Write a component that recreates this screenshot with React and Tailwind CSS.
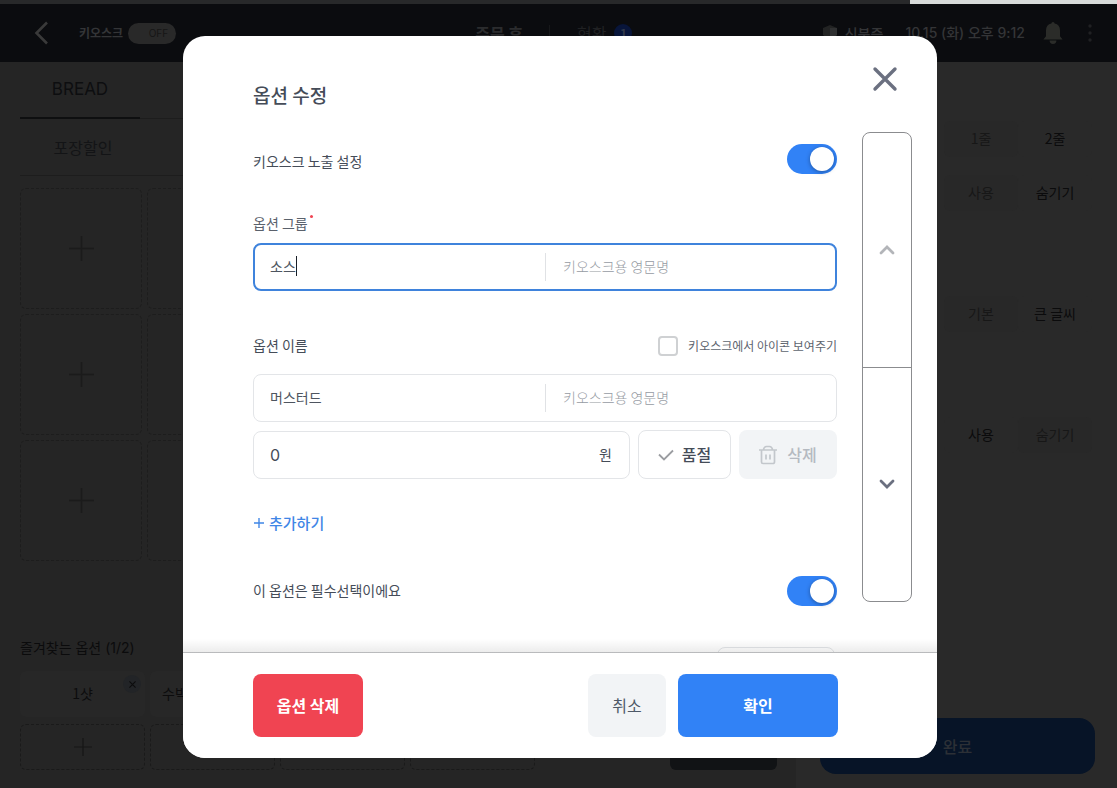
import React, { useState } from "react";

function Plus({ className }) {
  return (
    <svg viewBox="0 0 24 24" className={className} fill="none" stroke="currentColor" strokeWidth="1.6" aria-hidden="true">
      <path d="M12 0v24M0 12h24" />
    </svg>
  );
}

function Header() {
  return (
    <header className="flex h-[58px] items-center bg-[#0b0c0f] text-[#343537]">
      <button type="button" aria-label="뒤로" className="ml-[34px] text-[#3a3a3a]">
        <svg viewBox="0 0 14 24" className="h-6 w-3.5" fill="none" stroke="currentColor" strokeWidth="2.6">
          <path d="M13 1.5 2.5 12 13 22.5" />
        </svg>
      </button>
      <span className="ml-[31px] text-xs font-bold">키오스크</span>
      <button
        type="button"
        role="switch"
        aria-checked="false"
        aria-label="키오스크"
        className="ml-[5px] flex h-[21px] w-12 items-center justify-end rounded-full bg-[#292929] pr-2 font-['Inter',sans-serif] text-[10px] text-[#161616]"
      >
        OFF
      </button>
      <nav className="ml-[299px] flex items-center text-[15px]">
        <a href="#order" className="text-base font-bold text-[#2b2c2e]">주문 후</a>
        <span className="ml-[26px] h-4 w-px bg-[#17181a]" />
        <a href="#status" className="ml-[27px] text-base text-[#202123]">현황</a>
        <span className="ml-2 flex size-[18px] items-center justify-center rounded-full bg-[#08153a] text-xs font-bold text-[#323a4a]">1</span>
      </nav>
      <div className="ml-auto flex items-center">
        <svg viewBox="0 0 16 16" className="size-4" aria-hidden="true">
          <path d="M8 0 15 3v7l-7 6-7-6V3z" fill="#222323" />
          <path d="M8 3 15 3v7l-7 6z" fill="#2f3031" />
        </svg>
        <span className="ml-[7px] text-sm font-medium">신분증</span>
        <time className="ml-[22px] font-['Inter','Noto_Sans_CJK_KR',sans-serif] text-sm font-medium">10.15 (화) 오후 9:12</time>
        <button type="button" aria-label="알림" className="ml-[18px] text-[#2b2c29]">
          <svg viewBox="0 0 20 22" className="h-[22px] w-5" fill="currentColor">
            <path d="M10 0a1.6 1.6 0 0 1 1.6 1.6A6.8 6.8 0 0 1 17 8.200v6l2.600 3.200H.4L3 14.200v-6a6.800 6.800 0 0 1 5.400-6.600A1.600 1.600 0 0 1 10 0zM6.600 18.600h6.800a3.400 3.400 0 0 1-6.800 0z" />
          </svg>
        </button>
        <button type="button" aria-label="더보기" className="mr-[25px] ml-[25px] text-[#202123]">
          <svg viewBox="0 0 4 18" className="h-[18px] w-1" fill="currentColor">
            <circle cx="2" cy="2" r="1.700" />
            <circle cx="2" cy="9" r="1.700" />
            <circle cx="2" cy="16" r="1.700" />
          </svg>
        </button>
      </div>
    </header>
  );
}

const tiles = Array.from({ length: 18 }, (_, i) => i);

function MenuPanel() {
  return (
    <section className="flex min-w-0 flex-1 flex-col bg-[#252525] pr-[19px] pb-[18px] pl-5">
      <div className="flex h-[57px] border-b border-[#1d1d1d]">
        <button type="button" className="-mb-px w-[120px] border-b-2 border-[#0e0f10] font-['Inter',sans-serif] text-[17px] text-[#0d0e10]">BREAD</button>
      </div>
      <div className="flex h-[57px] border-b border-[#1d1d1d]">
        <button type="button" className="w-[126px] text-base text-[#131416]">포장할인</button>
      </div>
      <div className="mt-3 grid grid-cols-6 gap-[5px]">
        {tiles.map((t) => (
          <button key={t} type="button" aria-label="메뉴 추가" className="flex h-[121px] items-center justify-center rounded-md border border-dashed border-[#1d1d1d] text-[#1b1b1b]">
            <Plus className="size-[25px]" />
          </button>
        ))}
      </div>
      <h2 className="mt-auto font-['Inter','Noto_Sans_CJK_KR',sans-serif] text-sm leading-5 text-[#0b0b0c]">즐겨찾는 옵션 (1/2)</h2>
      <div className="mt-[13px] flex items-end justify-between">
        <div className="grid w-[515px] grid-cols-4 gap-x-[5px] gap-y-[7px] text-sm text-[#0c0c0d]">
          <div className="relative">
            <button type="button" className="h-[46px] w-full rounded-md bg-[#272727] pb-0.5">1샷</button>
            <button type="button" aria-label="1샷 삭제" className="absolute top-1 right-1 flex size-[18px] items-center justify-center rounded-full bg-[#222427]">
              <svg viewBox="0 0 8 8" className="size-[7px]" stroke="currentColor" strokeWidth="1.300"><path d="M.5.5l7 7M7.500.5l-7 7" /></svg>
            </button>
          </div>
          <button type="button" className="h-[46px] rounded-md bg-[#272727] pb-0.5 pl-3 text-left">수박주스</button>
          <button type="button" aria-label="추가" className="h-[46px] rounded-md border border-dashed border-[#1a1a1a]" />
          <button type="button" aria-label="추가" className="h-[46px] rounded-md border border-dashed border-[#1a1a1a]" />
          {[0, 1, 2, 3].map((n) => (
            <button key={n} type="button" aria-label="옵션 추가" className="flex h-[46px] items-center justify-center rounded-md border border-dashed border-[#1a1a1a] text-[#161616]">
              <Plus className="size-[18px]" />
            </button>
          ))}
        </div>
        <button type="button" aria-label="다음" className="h-[46px] w-[107px] rounded-md bg-[#111315]" />
      </div>
    </section>
  );
}

function Segment({ items, active }) {
  return (
    <div className="flex h-9 justify-end pr-[3px] text-sm">
      {items.map((label, i) => (
        <button
          key={label}
          type="button"
          className={i === active ? "w-[74px] rounded-md bg-[#292929] pb-0.5 text-[#0b0b0c]" : "w-[74px] rounded-md bg-[#282828] pb-0.5 text-[#171717]"}
        >
          {label}
        </button>
      ))}
    </div>
  );
}

function SettingsPanel() {
  return (
    <aside className="flex w-[321px] shrink-0 flex-col bg-[#292929] pt-[59px] pr-[22px] pb-3.5 pl-6">
      <Segment items={["1줄", "2줄"]} active={1} />
      <div className="mt-[18px]"><Segment items={["사용", "숨기기"]} active={1} /></div>
      <div className="mt-[85px]"><Segment items={["기본", "큰 글씨"]} active={1} /></div>
      <div className="mt-[85px]"><Segment items={["사용", "숨기기"]} active={0} /></div>
      <button type="button" className="mt-auto h-14 rounded-2xl bg-[#071427] text-base font-medium text-[#2c3036]">완료</button>
    </aside>
  );
}

function Toggle({ id }) {
  const [on, setOn] = useState(true);
  return (
    <span className={on ? "flex h-[30px] w-[50px] items-center justify-end rounded-full bg-[#3182f6] p-[3px]" : "flex h-[30px] w-[50px] items-center rounded-full bg-[#d1d6db] p-[3px]"}>
      <input
        id={id}
        type="checkbox"
        role="switch"
        checked={on}
        onChange={() => setOn(!on)}
        className="size-6 cursor-pointer appearance-none rounded-full bg-white shadow-[0_1px_4px_rgba(0,0,0,0.35)]"
      />
    </span>
  );
}

function NameField({ label, value, focused }) {
  return (
    <div
      className={
        focused
          ? "grid h-12 grid-cols-2 items-center rounded-lg border-2 border-[#3f83dc] text-sm"
          : "grid h-12 grid-cols-2 items-center rounded-lg border border-[#e3e5e8] px-px text-sm"
      }
    >
      <div className="flex min-w-0 items-center pb-0.5 pl-[15px]">
        <input aria-label={label} defaultValue={value} className="min-w-0 [field-sizing:content] text-[#4e5560] caret-transparent outline-none" />
        {focused && <span className="h-5 w-px shrink-0 bg-[#191f28]" />}
      </div>
      <div className="flex h-7 min-w-0 items-center border-l border-[#e0e2e5] pb-0.5">
        <input aria-label={label + " 영문명"} placeholder="키오스크용 영문명" className="ml-[17px] min-w-0 flex-1 outline-none placeholder:font-light placeholder:text-[#969ba3]" />
      </div>
    </div>
  );
}

function Dialog() {
  return (
    <div role="dialog" aria-modal="true" aria-labelledby="dialog-title" className="flex h-[722px] w-[754px] flex-col overflow-hidden rounded-[22px] bg-white text-[#454c58]">
      <div className="flex min-h-0 flex-1 overflow-hidden pr-[25px] pl-[70px]">
        <form className="min-w-0 flex-1 pt-[45px]">
          <h1 id="dialog-title" className="text-[19px] leading-7 font-medium">옵션 수정</h1>
          <div className="mt-[35px] flex items-end justify-between">
            <label htmlFor="kiosk-visible" className="pb-px text-sm leading-6">키오스크 노출 설정</label>
            <Toggle id="kiosk-visible" />
          </div>
          <div className="mt-[39px] flex text-sm leading-5 text-[#5a616c]">
            옵션 그룹
            <span className="mt-0.5 ml-0.5 size-[3px] rounded-full bg-[#f04452]" />
          </div>
          <div className="mt-2.5"><NameField label="옵션 그룹" value="소스" focused /></div>
          <div className="mt-11 flex items-center justify-between leading-5">
            <span className="pb-0.5 text-sm">옵션 이름</span>
            <label className="flex items-center gap-2.5 text-xs leading-5 text-[#5d646e]">
              <input type="checkbox" className="size-5 appearance-none rounded border-2 border-[#cfd1d3] checked:bg-[#3182f6]" />
              키오스크에서 아이콘 보여주기
            </label>
          </div>
          <div className="mt-[17px]"><NameField label="옵션 이름" value="머스터드" /></div>
          <div className="mt-2 flex items-end gap-2">
            <label className="flex h-12 min-w-0 flex-1 items-center rounded-lg border border-[#e3e5e8] px-4 pr-[17px] pb-0.5 text-sm">
              <input aria-label="가격" defaultValue="0" className="min-w-0 flex-1 pt-0.5 font-['Inter',sans-serif] text-base outline-none" />
              원
            </label>
            <button type="button" className="flex h-[49px] w-[93px] items-center justify-center gap-2 rounded-lg border border-[#e3e5e8] text-base font-medium">
              <svg viewBox="0 0 16 12" className="h-3 w-4 text-[#9b9da1]" fill="none" stroke="currentColor" strokeWidth="1.800" aria-hidden="true">
                <path d="M1 5.500 6 10.500 15 1.500" />
              </svg>
              <span className="pb-0.5">품절</span>
            </button>
            <button type="button" className="flex h-[49px] w-[98px] items-center justify-center gap-2.5 rounded-lg bg-[#f2f4f6] text-base font-medium text-[#b5bac1]">
              <svg viewBox="0 0 18 20" className="h-5 w-[18px] text-[#c3c7cc]" fill="none" stroke="currentColor" strokeWidth="1.700" aria-hidden="true">
                <path d="M0 5h18M4.500 5c0-2 1.500-3.500 3-3.500h3c1.500 0 3 1.500 3 3.500M2.500 5v12a1.500 1.500 0 0 0 1.500 1.500h10a1.500 1.500 0 0 0 1.500-1.500V5M7 9.500v5M11 9.500v5" />
              </svg>
              <span className="pb-0.5">삭제</span>
            </button>
          </div>
          <button type="button" className="mt-[34px] flex items-center gap-[5px] text-[15px] leading-5 font-medium text-[#3f86e6]">
            <svg viewBox="0 0 11 11" className="ml-px size-2.5" stroke="currentColor" strokeWidth="1.500" aria-hidden="true">
              <path d="M5.500 0v11M0 5.500h11" />
            </svg>
            추가하기
          </button>
          <div className="mt-[43px] flex items-center justify-between">
            <label htmlFor="required" className="pb-0.5 text-sm leading-6">이 옵션은 필수선택이에요</label>
            <Toggle id="required" />
          </div>
          <div className="mt-[41px] flex justify-end pr-0.5">
            <input aria-label="선택 개수" className="h-12 w-[118px] rounded-lg border border-[#e3e5e8]" />
          </div>
        </form>
        <div className="ml-[25px] flex w-[50px] flex-col items-center">
          <button type="button" aria-label="닫기" className="mt-[30px] mr-1 text-[#6b7080]">
            <svg viewBox="0 0 26 26" className="size-[26px]" fill="none" stroke="currentColor" strokeWidth="3.400" strokeLinecap="round">
              <path d="M3 3l20 20M23 3 3 23" />
            </svg>
          </button>
          <div className="mt-10 flex h-[470px] w-full flex-col rounded-lg border border-[#8b8c8f]">
            <button type="button" aria-label="위로" className="flex flex-1 items-center justify-center border-b border-[#8b8c8f] text-[#b3b5b9]">
              <svg viewBox="0 0 16 10" className="h-2.5 w-4" fill="none" stroke="currentColor" strokeWidth="2.800" strokeLinecap="round">
                <path d="M2 8l6-6 6 6" />
              </svg>
            </button>
            <button type="button" aria-label="아래로" className="flex flex-1 items-center justify-center text-[#6b7080]">
              <svg viewBox="0 0 16 10" className="h-2.5 w-4" fill="none" stroke="currentColor" strokeWidth="2.800" strokeLinecap="round">
                <path d="M2 2l6 6 6-6" />
              </svg>
            </button>
          </div>
        </div>
      </div>
      <footer className="relative flex h-[106px] shrink-0 items-center gap-3 border-t border-[#c9cacc] bg-white pr-[99px] pl-[70px] text-base">
        <span className="pointer-events-none absolute inset-x-0 bottom-full h-3.5 bg-linear-to-t from-black/8 to-transparent" />
        <button type="button" className="mr-auto h-[63px] w-[110px] rounded-lg bg-[#f04452] pb-0.5 font-bold text-white">옵션 삭제</button>
        <button type="button" className="h-[63px] w-[78px] rounded-lg bg-[#f2f4f6] pb-0.5 text-[#4e5968]">취소</button>
        <button type="button" className="h-[63px] w-40 rounded-lg bg-[#3182f6] pb-0.5 font-bold text-white">확인</button>
      </footer>
    </div>
  );
}

export default function App() {
  return (
    <div className="relative flex min-h-screen flex-col bg-[#252525] font-['Noto_Sans_CJK_KR','Noto_Sans',sans-serif]">
      <div className="flex h-1 bg-[#28292a]">
        <span className="ml-auto w-[207px] bg-[#d8dbda]" />
      </div>
      <Header />
      <main className="flex flex-1">
        <MenuPanel />
        <SettingsPanel />
      </main>
      <div className="absolute inset-0 flex items-start justify-center pt-9 pl-[3px]">
        <Dialog />
      </div>
    </div>
  );
}
